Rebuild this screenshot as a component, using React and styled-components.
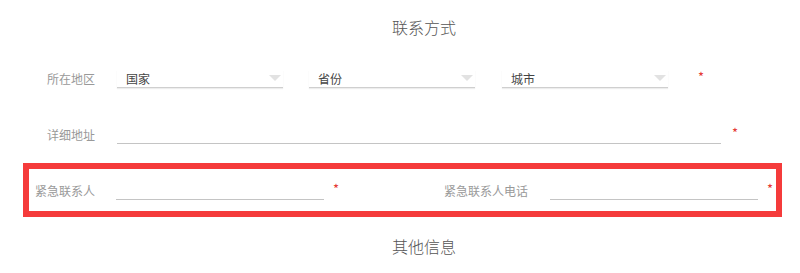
import styled, { createGlobalStyle } from "styled-components";

const GlobalStyle = createGlobalStyle`
  html, body {
    margin: 0;
    padding: 0;
    background: #fff;
    font-family: "Noto Sans CJK SC", "Noto Sans", sans-serif;
  }
`;

const Page = styled.div`
  width: 800px;
  height: 273px;
  overflow: hidden;
`;

const SectionTitle = styled.div`
  margin-top: ${(p) => p.$top}px;
  padding-left: 48px;
  text-align: center;
  font-size: 16px;
  font-weight: 300;
  line-height: 22px;
  color: #555;
`;

const Row = styled.div`
  display: flex;
  align-items: center;
  margin-top: ${(p) => p.$top || 0}px;
`;

const Label = styled.div`
  width: ${(p) => p.$width}px;
  flex-shrink: 0;
  text-align: right;
  font-size: 12px;
  line-height: 18px;
  height: 18px;
  color: #999;
  white-space: nowrap;
`;

const Field = styled.div`
  box-sizing: border-box;
  width: ${(p) => p.$width}px;
  height: 18px;
  margin-left: ${(p) => p.$gap}px;
  border-bottom: 1px solid #c4c4c4;
  flex-shrink: 0;
`;

const Select = styled.div`
  position: relative;
  box-sizing: border-box;
  width: 166px;
  height: 18px;
  margin-left: ${(p) => p.$gap}px;
  padding-left: 9px;
  font-size: 12px;
  line-height: 17px;
  color: #444;
  border-bottom: 1px solid #cfcfcf;
  box-shadow: 0 1px 1px rgba(0, 0, 0, 0.07);
  flex-shrink: 0;
`;

const Arrow = styled.span`
  position: absolute;
  right: 2px;
  top: 5px;
  width: 0;
  height: 0;
  border-left: 6px solid transparent;
  border-right: 6px solid transparent;
  border-top: 6px solid #e2e2e2;
`;

const Star = styled.span`
  margin-left: ${(p) => p.$gap}px;
  align-self: flex-start;
  margin-top: -2px;
  font-size: 13px;
  line-height: 18px;
  color: #e53935;
  flex-shrink: 0;
`;

const Highlight = styled.div`
  box-sizing: border-box;
  width: 759px;
  margin-left: 23px;
  margin-top: 19px;
  border: 6px solid #f53b3b;
  padding: 13px 0 11px;
`;

const Selects = [
  { text: "国家", gap: 22 },
  { text: "省份", gap: 26 },
  { text: "城市", gap: 27 },
];

export default function App() {
  return (
    <Page>
      <GlobalStyle />
      <SectionTitle $top={16}>联系方式</SectionTitle>

      <Row $top={32}>
        <Label $width={95}>所在地区</Label>
        {Selects.map((s) => (
          <Select key={s.text} $gap={s.gap}>
            {s.text}
            <Arrow />
          </Select>
        ))}
        <Star $gap={30}>*</Star>
      </Row>

      <Row $top={38}>
        <Label $width={95}>详细地址</Label>
        <Field $width={604} $gap={22} />
        <Star $gap={11}>*</Star>
      </Row>

      <Highlight>
        <Row>
          <Label $width={66}>紧急联系人</Label>
          <Field $width={208} $gap={21} />
          <Star $gap={9}>*</Star>
          <Label $width={189}>紧急联系人电话</Label>
          <Field $width={208} $gap={22} />
          <Star $gap={9}>*</Star>
        </Row>
      </Highlight>

      <SectionTitle $top={18}>其他信息</SectionTitle>
    </Page>
  );
}
